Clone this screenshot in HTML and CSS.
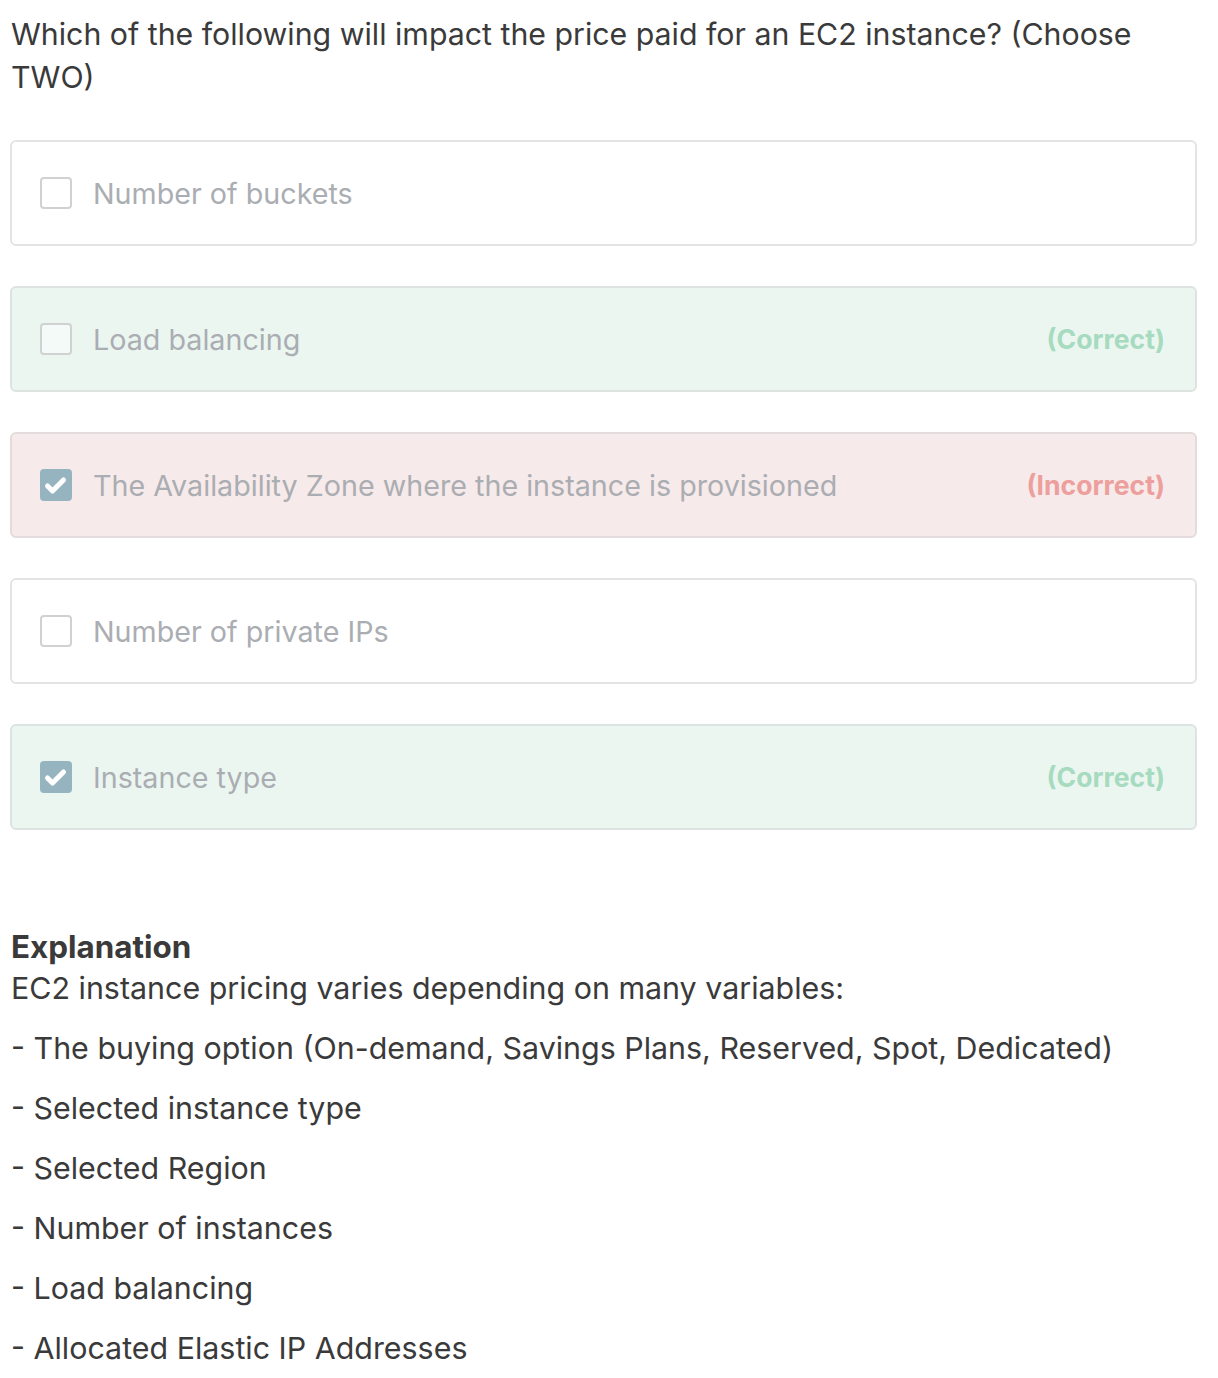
FILE: index.html
```html
<!DOCTYPE html>
<html>
<head>
<meta charset="utf-8">
<link rel="stylesheet" href="styles.css">
</head>
<body>
<div class="page">
  <p class="question">Which of the following will impact the price paid for an EC2 instance? (Choose TWO)</p>
  <div class="options">
    <div class="option">
      <span class="box"></span>
      <span class="label">Number of buckets</span>
    </div>
    <div class="option correct">
      <span class="box"></span>
      <span class="label">Load balancing</span>
      <span class="verdict">(Correct)</span>
    </div>
    <div class="option incorrect">
      <span class="box checked"><svg viewBox="0 0 32 32" width="32" height="32"><path d="M7.5 17 L12.5 22 L23.5 11" fill="none" stroke="#fff" stroke-width="5" stroke-linecap="round" stroke-linejoin="round"/></svg></span>
      <span class="label">The Availability Zone where the instance is provisioned</span>
      <span class="verdict">(Incorrect)</span>
    </div>
    <div class="option">
      <span class="box"></span>
      <span class="label">Number of private IPs</span>
    </div>
    <div class="option correct">
      <span class="box checked"><svg viewBox="0 0 32 32" width="32" height="32"><path d="M7.5 17 L12.5 22 L23.5 11" fill="none" stroke="#fff" stroke-width="5" stroke-linecap="round" stroke-linejoin="round"/></svg></span>
      <span class="label">Instance type</span>
      <span class="verdict">(Correct)</span>
    </div>
  </div>
  <div class="explanation">
    <h3 class="exp-title">Explanation</h3>
    <p class="exp-intro">EC2 instance pricing varies depending on many variables:</p>
    <p class="exp-item">- The buying option (On-demand, Savings Plans, Reserved, Spot, Dedicated)</p>
    <p class="exp-item">- Selected instance type</p>
    <p class="exp-item">- Selected Region</p>
    <p class="exp-item">- Number of instances</p>
    <p class="exp-item">- Load balancing</p>
    <p class="exp-item">- Allocated Elastic IP Addresses</p>
  </div>
</div>
</body>
</html>
```

FILE: styles.css
```css
html, body {
  margin: 0;
  padding: 0;
  background: #ffffff;
}
body {
  font-family: Inter, "Noto Sans", "Liberation Sans", sans-serif;
  color: #3a3a3a;
}
.page {
  padding: 13px 21px 0 10px;
}
.question {
  margin: 0 0 0 1px;
  font-size: 30.3px;
  line-height: 43px;
}
.options {
  display: flex;
  flex-direction: column;
  gap: 40px;
  margin-top: 41px;
}
.option {
  display: flex;
  align-items: center;
  height: 106px;
  box-sizing: border-box;
  border: 2px solid #e4e4e4;
  border-radius: 6px;
  padding: 0 30px 0 28px;
  background: #fff;
}
.option.correct {
  background: #ecf6f1;
  border-color: #dde3e0;
}
.option.incorrect {
  background: #f7eaea;
  border-color: #e4dcdc;
}
.box {
  width: 32px;
  height: 32px;
  box-sizing: border-box;
  border: 2px solid #cfd1d3;
  border-radius: 4px;
  flex: none;
  background: #fff;
}
.option.correct .box {
  background: #f4faf8;
}
.box.checked {
  background: #95b4bf !important;
  border-color: #95b4bf;
  display: flex;
  align-items: center;
  justify-content: center;
}
.box.checked svg {
  display: block;
  margin: -2px;
}
.label {
  margin-left: 21px;
  font-size: 28.7px;
  line-height: 43px;
  color: #aaadb1;
  flex: 1;
}
.verdict {
  font-size: 26.6px;
  font-weight: 700;
  line-height: 43px;
}
.correct .verdict {
  color: #a6dbbf;
}
.incorrect .verdict {
  color: #ec9f9c;
}
.explanation {
  margin-top: 98px;
  padding-left: 1px;
}
.exp-title {
  margin: 0;
  font-size: 31.4px;
  font-weight: 700;
  line-height: 39px;
}
.exp-intro {
  margin: 0 0 17px 0;
  font-size: 30.4px;
  line-height: 43px;
}
.exp-item {
  margin: 0 0 17px 0;
  font-size: 30.4px;
  line-height: 43px;
}
```
